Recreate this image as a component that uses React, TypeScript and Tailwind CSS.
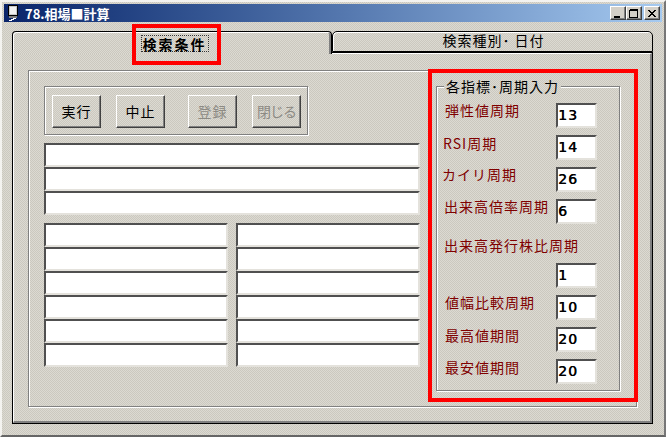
const FONT = "font-['Noto_Sans_CJK_JP','Liberation_Sans',sans-serif]";
const DITHER = 'bg-[#d4d0c8] bg-[repeating-conic-gradient(#dcdad2_0_25%,#cbc8bf_0_50%)] bg-[length:2px_2px]';
const ETCHED = 'border border-[#808080] shadow-[inset_1px_1px_0_#fff,1px_1px_0_#fff]';
const SUNKEN = 'border-2 border-t-[#505050] border-l-[#505050] border-b-[#e4e2dc] border-r-[#e4e2dc] bg-white';

const ACTIONS = [
  { label: '実行', className: 'ml-0 tracking-[1px]', disabled: false },
  { label: '中止', className: 'ml-[15px] tracking-[1px]', disabled: false },
  { label: '登録', className: 'ml-[23px] tracking-[1px]', disabled: true },
  { label: '閉じる', className: 'ml-[15px] tracking-[-1px]', disabled: true },
];

const PERIODS = [
  { label: '弾性値周期', value: '13', pad: 'pt-px pl-[8px]' },
  { label: 'RSI周期', value: '14', pad: 'pt-[2px] pl-[6px]' },
  { label: 'カイリ周期', value: '26', pad: 'pt-px pl-[5px]' },
  { label: '出来高倍率周期', value: '6', pad: 'pt-px pl-[7px]' },
  { label: '出来高発行株比周期', value: null, pad: 'pt-[8px] pl-[7px]' },
  { label: '', value: '1', pad: '' },
  { label: '値幅比較周期', value: '10', pad: 'pt-px pl-[8px]' },
  { label: '最高値期間', value: '20', pad: 'pt-[2px] pl-[8px]' },
  { label: '最安値期間', value: '20', pad: 'pt-[2px] pl-[8px]' },
];

function ActionButton({ label, className, disabled }: { label: string; className: string; disabled: boolean }) {
  return (
    <button
      className={`${className} ${DITHER} w-[49px] h-[33px] flex items-center justify-center border border-t-white border-l-white border-r-[#404040] border-b-[#404040] shadow-[inset_-1px_-1px_0_#808080] text-[14px] ${
        disabled ? 'text-[#8c8a84]' : 'text-black'
      }`}
    >
      {label}
    </button>
  );
}

function CaptionButton({ children, className }: { children: React.ReactNode; className: string }) {
  return (
    <div
      className={`${className} w-[16px] h-[14px] flex items-center justify-center bg-[#d4d0c8] border border-t-white border-l-white border-r-[#404040] border-b-[#404040] shadow-[inset_-1px_-1px_0_#808080]`}
    >
      <svg width="10" height="9" viewBox="0 0 10 9" shapeRendering="crispEdges" stroke="#000" fill="none">
        {children}
      </svg>
    </div>
  );
}

export default function App() {
  return (
    <div
      className={`${FONT} ${DITHER} relative w-[666px] h-[437px] overflow-hidden flex flex-col border-2 border-t-[#f4f3f0] border-l-[#f4f3f0] border-r-[#777] border-b-[#666] p-[2px]`}
    >
      {/* Title bar */}
      <div className="h-[18px] shrink-0 flex items-center bg-gradient-to-r from-[#0a246a] to-[#a6caf0] pl-[2px] pr-[2px]">
        <svg width="16" height="17" viewBox="0 0 16 17" shapeRendering="crispEdges" className="shrink-0">
          <rect x="2.5" y="0.5" width="9" height="10" fill="#c8c8c8" stroke="#000" />
          <rect x="4" y="2" width="6" height="7" fill="#f0f0f0" />
          <rect x="3" y="11" width="8" height="2" fill="#808080" />
          <path d="M3 16h3v-1h2v-1h2v-1H7v1H5v1H3z" fill="#fff" />
        </svg>
        <span className="ml-[3px] text-[13px] leading-none font-bold text-white whitespace-nowrap">78.相場■計算</span>
        <div className="ml-auto flex items-center">
          <CaptionButton className="">
            <path d="M1 7.5h6M1 8.5h6" />
          </CaptionButton>
          <CaptionButton className="">
            <path d="M0.5 1.5h8v7h-8zM0.5 0.5h8" />
          </CaptionButton>
          <CaptionButton className="ml-[2px]">
            <path d="M1 1l7 7M2 1l7 7M8 1l-7 7M9 1l-7 7" />
          </CaptionButton>
        </div>
      </div>

      {/* Tabs */}
      <div className="mt-[9px] ml-[8px] w-[641px] h-[21px] flex shrink-0">
        <div
          className={`${DITHER} relative z-10 w-[320px] h-[23px] rounded-t-[4px] border-t border-l border-r border-black shadow-[inset_1px_1px_0_#fff,inset_-2px_0_0_#808080] flex justify-center pt-[3px]`}
        >
          <span className="h-[15px] ml-[5px] px-[1px] flex items-center border border-dotted border-[#333] text-[14px] leading-none font-bold tracking-[2px] text-black box-content">
            検索条件
          </span>
        </div>
        <div className={`${DITHER} w-[321px] h-[21px] rounded-t-[5px] border border-black shadow-[inset_1px_1px_0_#fff] flex items-center justify-center pl-[2px] pb-[2px] text-[14px] tracking-[1px] text-black`}>
          検索種別･ 日付
        </div>
      </div>

      {/* Tab page */}
      <div className="ml-[8px] w-[641px] h-[372px] border border-black">
        <div className="w-full h-full border-t border-l border-white border-r-2 border-b-2 border-r-[#808080] border-b-[#808080] pl-[14px] pt-[16px]">
          <div className={`${ETCHED} relative w-[609px] h-[337px] pl-[15px] pt-[15px] flex gap-[16px]`}>
            {/* Left column */}
            <div className="w-[376px] flex flex-col">
              <div className={`${ETCHED} w-[264px] h-[49px] pl-[7px] pt-[8px] flex`}>
                {ACTIONS.map((a) => (
                  <ActionButton key={a.label} {...a} />
                ))}
              </div>
              <div className="mt-[8px] flex flex-col">
                {[0, 1, 2].map((i) => (
                  <div key={i} className={`${SUNKEN} h-[24px]`} />
                ))}
              </div>
              <div className="mt-[8px] grid grid-cols-2 gap-x-[8px]">
                {[0, 1, 2, 3, 4, 5, 6, 7, 8, 9, 10, 11].map((i) => (
                  <div key={i} className={`${SUNKEN} h-[24px]`} />
                ))}
              </div>
            </div>

            {/* Period inputs */}
            <div className={`${ETCHED} relative w-[184px] h-[305px] pt-[14px]`}>
              <span className={`${DITHER} absolute left-[7px] top-[-9px] px-[2px] text-[14px] leading-[16px] tracking-[1px] text-black whitespace-nowrap`}>
                各指標･周期入力
              </span>
              {PERIODS.map((p) => (
                <div key={p.label || p.value} className="relative h-[32px] flex">
                  <span className={`${p.pad} text-[14px] leading-[16px] tracking-[1px] text-[#800000] whitespace-nowrap`}>{p.label}</span>
                  {p.value !== null && (
                    <div className={`${SUNKEN} absolute left-[119px] top-[2px] w-[41px] h-[25px] flex items-center font-['DejaVu_Sans',sans-serif] text-[14px] tracking-[1px] [text-shadow:0.5px_0_0_#000] text-black`}>
                      {p.value}
                    </div>
                  )}
                </div>
              ))}
            </div>
          </div>
        </div>
      </div>

      {/* Red annotation boxes */}
      <div className="absolute left-[130px] top-[22px] w-[89px] h-[41px] border-[4px] border-[#ff0000] z-20" />
      <div className="absolute left-[426px] top-[67px] w-[210px] h-[333px] border-[4px] border-[#ff0000] z-20" />
    </div>
  );
}
